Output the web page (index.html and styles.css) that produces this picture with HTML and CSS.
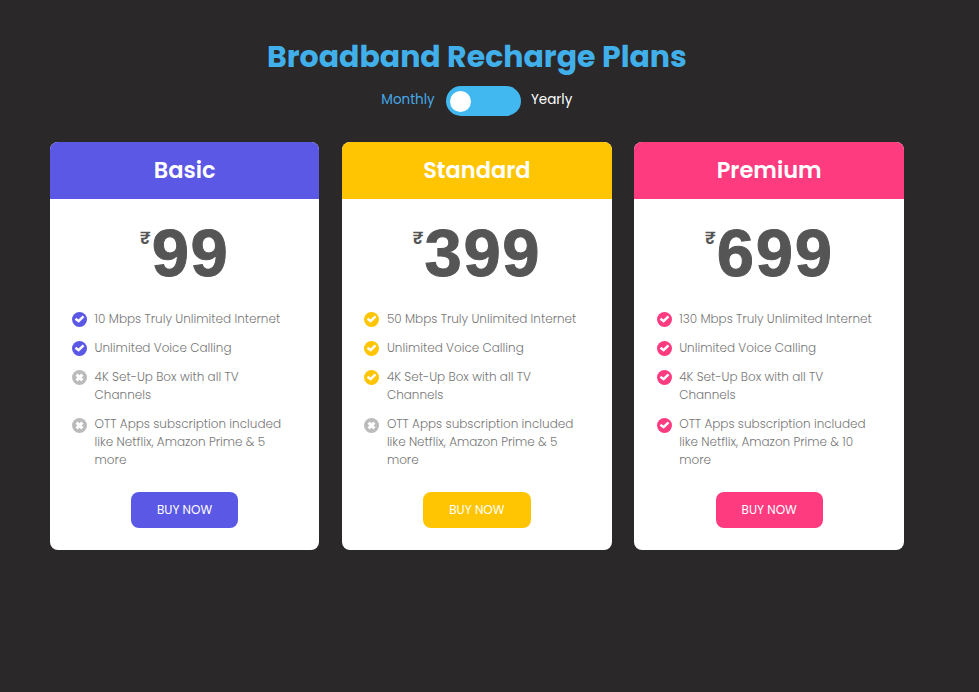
FILE: index.html
```html
<!DOCTYPE html>
<html lang="en">
<head>
<meta charset="utf-8">
<title>Broadband Recharge Plans</title>
<link rel="stylesheet" href="styles.css">
</head>
<body>
<svg width="0" height="0" class="sprite" aria-hidden="true">
  <symbol id="check" viewBox="0 0 15 15"><circle cx="7.5" cy="7.5" r="7.5" fill="currentColor"/><path d="M3.5 6.8 6.6 9.2 11.5 4.3" fill="none" stroke="#fff" stroke-width="2.5"/></symbol>
  <symbol id="cross" viewBox="0 0 15 15"><circle cx="7.5" cy="7.5" r="7.5" fill="currentColor"/><path d="M4.6 4.6 10.4 10.4M10.4 4.6 4.6 10.4" fill="none" stroke="#fff" stroke-width="2.9"/></symbol>
</svg>
<main class="page">
  <h1 class="title">Broadband Recharge Plans</h1>
  <div class="period">
    <span class="monthly">Monthly</span>
    <button class="toggle" aria-label="Billing period"><span class="knob"></span></button>
    <span class="yearly">Yearly</span>
  </div>
  <section class="plans">
    <article class="card basic">
      <h2 class="name">Basic</h2>
      <p class="price"><span class="currency">₹</span><span class="amount">99</span></p>
      <ul class="features">
        <li><svg class="icon"><use href="#check"/></svg><span>10 Mbps Truly Unlimited Internet</span></li>
        <li><svg class="icon"><use href="#check"/></svg><span>Unlimited Voice Calling</span></li>
        <li><svg class="icon off"><use href="#cross"/></svg><span>4K Set-Up Box with all TV<br>Channels</span></li>
        <li><svg class="icon off low"><use href="#cross"/></svg><span>OTT Apps subscription included<br>like Netflix, Amazon Prime &amp; 5<br>more</span></li>
      </ul>
      <button class="buy">BUY NOW</button>
    </article>
    <article class="card standard">
      <h2 class="name">Standard</h2>
      <p class="price"><span class="currency">₹</span><span class="amount">399</span></p>
      <ul class="features">
        <li><svg class="icon"><use href="#check"/></svg><span>50 Mbps Truly Unlimited Internet</span></li>
        <li><svg class="icon"><use href="#check"/></svg><span>Unlimited Voice Calling</span></li>
        <li><svg class="icon"><use href="#check"/></svg><span>4K Set-Up Box with all TV<br>Channels</span></li>
        <li><svg class="icon off low"><use href="#cross"/></svg><span>OTT Apps subscription included<br>like Netflix, Amazon Prime &amp; 5<br>more</span></li>
      </ul>
      <button class="buy">BUY NOW</button>
    </article>
    <article class="card premium">
      <h2 class="name">Premium</h2>
      <p class="price"><span class="currency">₹</span><span class="amount">699</span></p>
      <ul class="features">
        <li><svg class="icon"><use href="#check"/></svg><span>130 Mbps Truly Unlimited Internet</span></li>
        <li><svg class="icon"><use href="#check"/></svg><span>Unlimited Voice Calling</span></li>
        <li><svg class="icon"><use href="#check"/></svg><span>4K Set-Up Box with all TV<br>Channels</span></li>
        <li><svg class="icon low"><use href="#check"/></svg><span>OTT Apps subscription included<br>like Netflix, Amazon Prime &amp; 10<br>more</span></li>
      </ul>
      <button class="buy">BUY NOW</button>
    </article>
  </section>
</main>
</body>
</html>
```
FILE: styles.css
```css
* { box-sizing: border-box; margin: 0; padding: 0; }
body { background: #2a2829; font-family: Poppins, Inter, sans-serif; color: #fff; }
.sprite { display: block; }
.page { width: 854.2px; margin: 36px 0 0 49.8px; }
.title { font-size: 30px; line-height: 42px; font-weight: 700; text-align: center; color: #41b0ea; white-space: nowrap; }
.period { display: flex; justify-content: center; margin-top: 8px; height: 30px; font-size: 13.5px; line-height: 27px; }
.monthly { width: 53.6px; color: #46a9e8; }
.yearly { width: 41.6px; }
.toggle { width: 75px; height: 30px; margin: 0 10px 0 11px; padding: 0 4px; border: 0; border-radius: 15px; background: #41b8f0; display: flex; align-items: center; }
.knob { width: 21px; height: 21px; border-radius: 50%; background: #fff; }
.plans { display: grid; grid-template-columns: repeat(3, 1fr); gap: 22.7px; margin-top: 26px; }
.card { height: 408px; border-radius: 8px; overflow: hidden; background: #fff; display: flex; flex-direction: column; align-items: center; }
.basic { --accent: #5b58e6; }
.standard { --accent: #ffc502; }
.premium { --accent: #ff3b7f; }
.name { width: 100%; height: 57px; background: var(--accent); text-align: center; font-size: 22.5px; line-height: 57px; font-weight: 600; }
.price { display: flex; justify-content: center; height: 75px; margin-top: 18px; color: #555; font-weight: 700; }
.currency { font-size: 18px; line-height: 42px; font-weight: 600; margin-right: 1px; }
.amount { font-family: "Liberation Sans", sans-serif; font-size: 67px; line-height: 72px; letter-spacing: 1.7px; -webkit-text-stroke: 1px #555; }
.features { list-style: none; align-self: stretch; margin: 18px 0 0 22.3px; display: flex; flex-direction: column; gap: 11px; font-size: 12px; line-height: 18px; font-weight: 300; color: #777; white-space: nowrap; }
.features li { display: flex; gap: 7.5px; }
.icon { width: 15px; height: 15px; margin-top: 2px; color: var(--accent); flex: none; }
.low { margin-top: 3px; }
.off { color: #bbb; }
.buy { width: 107.3px; height: 36px; margin-top: 23px; border: 0; border-radius: 8px; background: var(--accent); color: #fff; font: 400 12px/36px Poppins, Inter, sans-serif; }
```
